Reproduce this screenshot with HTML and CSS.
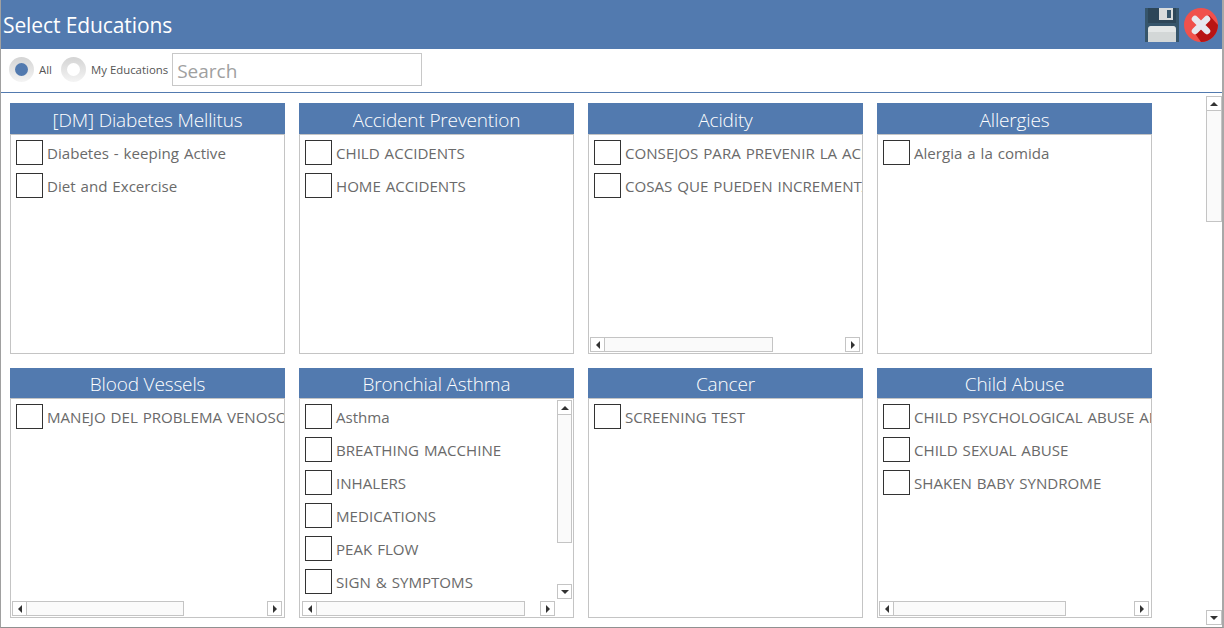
FILE: index.html
```html
<!DOCTYPE html>
<html lang="en">
<head>
<meta charset="utf-8">
<title>Select Educations</title>
<link rel="stylesheet" href="styles.css">
</head>
<body>
<div class="window">
  <header class="titlebar">
    <h1 class="title">Select Educations</h1>
    <div class="actions">
      <svg class="icon-save" width="34" height="34" viewBox="0 0 34 34"><rect width="34" height="34" fill="#36556b"/><rect x="3" width="28" height="15" fill="#2d4658"/><path d="M14 0h14v12h-14z" fill="#d9dcdc"/><rect x="22" y="2" width="4" height="8" fill="#36556b"/><path d="M3 21q0-3 3-3h22q3 0 3 3v13H3z" fill="#d3d7d7"/><path d="M3 24q0-6 3-6h22q3 0 3 6z" fill="#e4e7e7"/></svg>
      <svg class="icon-close" width="34" height="34" viewBox="0 0 34 34"><circle cx="17" cy="17" r="17" fill="#f0514c"/><path d="M10 24 25 7l9 10a17 17 0 0 1-17 17z" fill="#b81414"/><path d="M11 11 23 23M23 11 11 23" stroke="#e6e9f0" stroke-width="6.5" stroke-linecap="round"/></svg>
    </div>
  </header>
  <div class="toolbar">
    <label class="radio"><span class="radio-ring"><span class="radio-dot on"></span></span><span class="radio-text">All</span></label>
    <label class="radio"><span class="radio-ring"><span class="radio-dot"></span></span><span class="radio-text">My Educations</span></label>
    <input class="search" type="text" placeholder="Search">
  </div>
  <main class="content">
    <div class="grid">
      <section class="card">
        <h2 class="card-head">[DM] Diabetes Mellitus</h2>
        <div class="card-body"><div class="body-main"><ul class="list">
          <li class="item"><span class="check"></span><span class="label">Diabetes - keeping Active</span></li>
          <li class="item"><span class="check"></span><span class="label">Diet and Excercise</span></li>
        </ul></div></div>
      </section>
      <section class="card">
        <h2 class="card-head">Accident Prevention</h2>
        <div class="card-body"><div class="body-main"><ul class="list">
          <li class="item"><span class="check"></span><span class="label">CHILD ACCIDENTS</span></li>
          <li class="item"><span class="check"></span><span class="label">HOME ACCIDENTS</span></li>
        </ul></div></div>
      </section>
      <section class="card">
        <h2 class="card-head">Acidity</h2>
        <div class="card-body"><div class="body-main"><ul class="list">
          <li class="item"><span class="check"></span><span class="label">CONSEJOS PARA PREVENIR LA ACIDEZ</span></li>
          <li class="item"><span class="check"></span><span class="label">COSAS QUE PUEDEN INCREMENTAR LA ACIDEZ</span></li>
        </ul></div>
        <div class="hbar"><span class="sbtn"><i class="tri tri-l"></i></span><span class="hthumb"></span><span class="sbtn"><i class="tri tri-r"></i></span></div></div>
      </section>
      <section class="card">
        <h2 class="card-head">Allergies</h2>
        <div class="card-body"><div class="body-main"><ul class="list">
          <li class="item"><span class="check"></span><span class="label">Alergia a la comida</span></li>
        </ul></div></div>
      </section>
      <section class="card row2">
        <h2 class="card-head">Blood Vessels</h2>
        <div class="card-body"><div class="body-main"><ul class="list">
          <li class="item"><span class="check"></span><span class="label">MANEJO DEL PROBLEMA VENOSO</span></li>
        </ul></div>
        <div class="hbar"><span class="sbtn"><i class="tri tri-l"></i></span><span class="hthumb thumb-blood"></span><span class="sbtn"><i class="tri tri-r"></i></span></div></div>
      </section>
      <section class="card row2">
        <h2 class="card-head">Bronchial Asthma</h2>
        <div class="card-body"><div class="body-main"><ul class="list">
          <li class="item"><span class="check"></span><span class="label">Asthma</span></li>
          <li class="item"><span class="check"></span><span class="label">BREATHING MACCHINE</span></li>
          <li class="item"><span class="check"></span><span class="label">INHALERS</span></li>
          <li class="item"><span class="check"></span><span class="label">MEDICATIONS</span></li>
          <li class="item"><span class="check"></span><span class="label">PEAK FLOW</span></li>
          <li class="item"><span class="check"></span><span class="label">SIGN &amp; SYMPTOMS</span></li>
        </ul>
        <div class="vbar inner"><span class="sbtn"><i class="tri tri-u"></i></span><span class="vthumb inner-thumb"></span><span class="vgap"></span><span class="sbtn"><i class="tri tri-d"></i></span></div></div>
        <div class="hbar short"><span class="sbtn"><i class="tri tri-l"></i></span><span class="hthumb"></span><span class="sbtn"><i class="tri tri-r"></i></span></div></div>
      </section>
      <section class="card row2">
        <h2 class="card-head">Cancer</h2>
        <div class="card-body"><div class="body-main"><ul class="list">
          <li class="item"><span class="check"></span><span class="label">SCREENING TEST</span></li>
        </ul></div></div>
      </section>
      <section class="card row2">
        <h2 class="card-head">Child Abuse</h2>
        <div class="card-body"><div class="body-main"><ul class="list">
          <li class="item"><span class="check"></span><span class="label">CHILD PSYCHOLOGICAL ABUSE AND NEGLECT</span></li>
          <li class="item"><span class="check"></span><span class="label">CHILD SEXUAL ABUSE</span></li>
          <li class="item"><span class="check"></span><span class="label">SHAKEN BABY SYNDROME</span></li>
        </ul></div>
        <div class="hbar"><span class="sbtn"><i class="tri tri-l"></i></span><span class="hthumb thumb-child"></span><span class="sbtn"><i class="tri tri-r"></i></span></div></div>
      </section>
    </div>
    <div class="vbar outer"><span class="sbtn"><i class="tri tri-u"></i></span><span class="vthumb outer-thumb"></span><span class="vgap"></span><span class="sbtn"><i class="tri tri-d"></i></span></div>
  </main>
</div>
</body>
</html>
```
FILE: styles.css
```css
* { box-sizing: border-box; }
html, body { margin: 0; height: 100%; overflow: hidden; background: #fff; }
body { font-family: "Open Sans", "Noto Sans", sans-serif; }
.window {
  width: 1224px; height: 628px;
  display: flex; flex-direction: column;
  border-right: 2px solid #a8a8a8;
  border-bottom: 1px solid #909090;
  border-left: 1px solid #a0a0a0;
}
.titlebar {
  height: 49px; flex: none;
  background: #527aaf;
  display: flex; align-items: center; justify-content: space-between;
  padding: 0 4px 0 2px;
}
.title { margin: 0; font-size: 21px; font-weight: 400; color: #fff; letter-spacing: -0.1px; }
.actions { display: flex; gap: 5px; }
.actions svg { display: block; }
.toolbar {
  height: 44px; flex: none;
  display: flex; align-items: center;
  padding: 0 0 3px 8px;
  border-bottom: 1px solid #527aaf;
}
.radio { display: flex; align-items: center; gap: 5px; margin-right: 9px; }
.radio + .radio { margin-right: 4px; }
.radio-ring {
  width: 25px; height: 25px; border-radius: 50%;
  background: linear-gradient(#d4d4d4, #f4f4f4);
  display: flex; align-items: center; justify-content: center;
}
.radio-dot { width: 13px; height: 13px; border-radius: 50%; background: #fff; }
.radio-dot.on { background: #527aaf; }
.radio-text { font-size: 11.4px; color: #555; }
.search {
  width: 250px; height: 33px; padding: 3px 4px 0;
  border: 1px solid #c8c8c8; font: 19px "Open Sans", sans-serif; color: #555;
  outline: none;
}
.search::placeholder { color: #a0a0a0; opacity: 1; }
.content { flex: 1; min-height: 0; display: flex; justify-content: space-between; padding: 3px 0 0 9px; }
.grid {
  padding-top: 7px;
  display: grid; grid-template-columns: repeat(4, 275px); grid-template-rows: 251px 250px;
  column-gap: 14px; row-gap: 14px; align-content: start;
}
.card { display: flex; flex-direction: column; min-width: 0; }
.card-head {
  margin: 0; height: 31px; flex: none;
  background: #527aaf; color: #fff;
  font-size: 19px; font-weight: 300; line-height: 34px; text-align: center;
  letter-spacing: -0.15px;
}
.row2 .card-head { height: 30px; line-height: 32px; }
.card-body {
  flex: 1; min-height: 0; display: flex; flex-direction: column;
  border: 1px solid #c4c4c4; overflow: hidden;
}
.body-main { flex: 1; min-height: 0; display: flex; overflow: hidden; }
.list { flex: 1; min-width: 0; margin: 0; padding: 5px 0 0 5px; list-style: none; overflow: hidden; }
.item { height: 33px; display: flex; align-items: flex-start; gap: 4px; white-space: nowrap; }
.check { width: 27px; height: 25px; flex: none; border: 1px solid #333; background: #fff; }
.label { font-size: 15.1px; word-spacing: 1px; line-height: 27px; color: #6a6a6a; }
.hbar { height: 15px; flex: none; display: flex; margin: 0 1px 1px 1px; }
.hbar.short { margin: 0 1px 1px 2px; }
.sbtn {
  width: 15px; height: 15px; flex: none;
  border: 1px solid #c4c4c4; background: #fff;
  display: flex; align-items: center; justify-content: center;
}
.hthumb { width: 168px; border: 1px solid #c4c4c4; border-left: 0; background: #fafafa; margin-right: auto; }
.hbar.short .hthumb { width: 208px; }
.hthumb.thumb-blood { width: 157px; }
.hthumb.thumb-child { width: 172px; }
.hbar .sbtn:last-child { margin-right: 1px; }
.hbar.short .sbtn:last-child { margin-right: 17px; }
.vbar { width: 15px; flex: none; display: flex; flex-direction: column; }
.vgap { flex: 1; }
.vbar.inner { margin: 1px 1px 1px 0; height: 199px; }
.inner-thumb { height: 128px; border: 1px solid #c4c4c4; border-top: 0; background: #fafafa; }
.vbar.outer { height: 529px; width: 16px; }
.vbar.outer .sbtn { width: 16px; }
.outer-thumb { height: 111px; border: 1px solid #c4c4c4; border-top: 0; background: #fafafa; }
.tri { width: 0; height: 0; display: block; border-style: solid; border-color: transparent; }
.tri-l { border-width: 4px 4px 4px 0; border-right-color: #333; }
.tri-r { border-width: 4px 0 4px 4px; border-left-color: #333; }
.tri-u { border-width: 0 4px 4px 4px; border-bottom-color: #333; }
.tri-d { border-width: 4px 4px 0 4px; border-top-color: #333; }
```
